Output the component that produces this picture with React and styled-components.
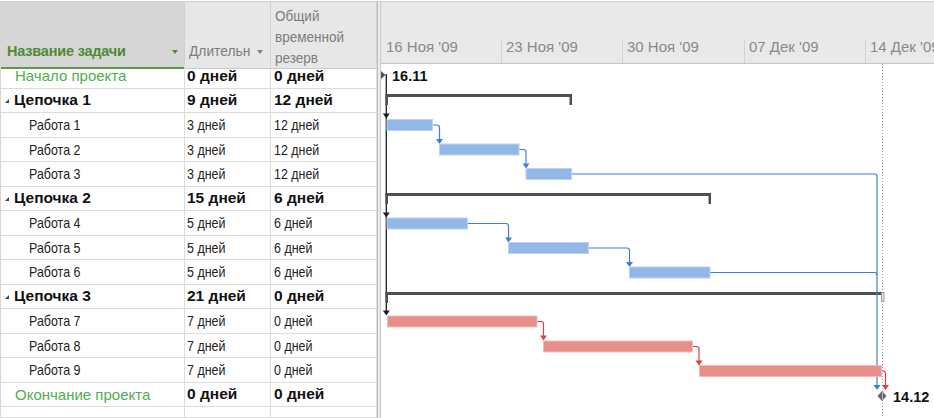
import React from "react";
import styled, { createGlobalStyle } from "styled-components";

const GlobalStyle = createGlobalStyle`
  html, body { margin: 0; padding: 0; background: #fff; }
  body { font-family: "Liberation Sans", Arial, sans-serif; }
  #root { width: 934px; height: 418px; overflow: hidden; }
  * { box-sizing: border-box; }
`;

const Page = styled.div`
  display: flex;
  width: 934px;
  height: 418px;
  padding-top: 1px;
  background: #fff;
  overflow: hidden;
`;

const Table = styled.div`
  width: 377px;
  display: flex;
  flex-direction: column;
  border-left: 1px solid #d6d6d6;
`;

const HeaderRow = styled.div`
  display: grid;
  grid-template-columns: 184px 86px 106px;
  height: 63px;
  border-top: 1px solid #cdcdcd;
`;

const NameHead = styled.div`
  background: #d6d6d6;
  border-bottom: 2px solid #5b9a47;
  border-right: 1px solid #cfcfcf;
  display: flex;
  align-items: flex-end;
  justify-content: space-between;
  padding: 0 6px 8px 6px;
`;

const HeadTitle = styled.span`
  font-size: 14.5px;
  font-weight: bold;
  color: #4f8a35;
  line-height: 16px;
  letter-spacing: -0.2px;
`;

const SortArrow = styled.span`
  flex: none;
  width: 0;
  height: 0;
  border-left: 3.5px solid transparent;
  border-right: 3.5px solid transparent;
  border-top: 4px solid ${(p) => p.$color};
  margin-bottom: 5px;
  margin-left: ${(p) => p.$gap || 0}px;
`;

const PlainHead = styled.div`
  background: #e7e7e7;
  border-bottom: 1px solid #c9c9c9;
  border-right: 1px solid #d2d2d2;
  display: flex;
  align-items: ${(p) => (p.$top ? "flex-start" : "flex-end")};
  padding: ${(p) => (p.$top ? "3px 0 0 4px" : "0 0 9px 4px")};
`;

const Squeeze = styled.span`
  display: inline-block;
  white-space: nowrap;
  transform: scaleX(${(p) => p.$sx || 0.83});
  transform-origin: left center;
`;

const HeadText = styled.div`
  font-size: 15px;
  line-height: ${(p) => p.$lh || 16}px;
  color: #7c7c7c;
  display: flex;
  align-items: flex-end;
`;

const Row = styled.div`
  display: grid;
  grid-template-columns: 184px 86px 106px;
  height: 24.5px;
  border-bottom: 1px solid #dcdcdc;
  flex: ${(p) => (p.$fill ? "1" : "none")};
`;

const Cell = styled.div`
  display: flex;
  align-items: center;
  padding-left: ${(p) => p.$pad || 2}px;
  border-right: 1px solid #dcdcdc;
  white-space: nowrap;
  overflow: hidden;
  font-size: ${(p) => (p.$bold ? 15.5 : 15)}px;
  color: ${(p) => p.$color || "#111"};
  font-weight: ${(p) => (p.$bold ? "bold" : "normal")};
`;

const Collapse = styled.span`
  width: 0;
  height: 0;
  border-left: 4px solid transparent;
  border-bottom: 4px solid #444;
  margin-right: 5px;
  margin-top: 2px;
`;

const Splitter = styled.div`
  width: 4px;
  background: #ebebeb;
  border-left: 1px solid #bcbcbc;
  border-right: 1px solid #c8c8c8;
`;

const Gantt = styled.div`
  flex: 1;
  display: flex;
  flex-direction: column;
  min-width: 0;
`;

const GanttHeader = styled.div`
  height: 63px;
  border-top: 1px solid #cdcdcd;
  border-bottom: 1px solid #c6c6c6;
  background: #e9e9e9;
  display: flex;
  flex-direction: column;
  justify-content: flex-end;
`;

const WeekRow = styled.div`
  display: flex;
  height: 24px;
`;

const WeekCell = styled.div`
  flex: none;
  width: ${(p) => p.$w}px;
  border-left: ${(p) => (p.$first ? "none" : "1px solid #d3d3d3")};
  padding-left: ${(p) => (p.$first ? 5 : 4)}px;
  font-size: 15px;
  line-height: 16px;
  color: #8a8a8a;
  white-space: nowrap;
  overflow: hidden;
`;

const GanttBody = styled.div`
  flex: 1;
  position: relative;
  overflow: hidden;
  background: #fff;
`;

const rows = [
  { t: "m", name: "Начало проекта", dur: "0 дней", res: "0 дней" },
  { t: "s", name: "Цепочка 1", dur: "9 дней", res: "12 дней" },
  { t: "w", name: "Работа 1", dur: "3 дней", res: "12 дней" },
  { t: "w", name: "Работа 2", dur: "3 дней", res: "12 дней" },
  { t: "w", name: "Работа 3", dur: "3 дней", res: "12 дней" },
  { t: "s", name: "Цепочка 2", dur: "15 дней", res: "6 дней" },
  { t: "w", name: "Работа 4", dur: "5 дней", res: "6 дней" },
  { t: "w", name: "Работа 5", dur: "5 дней", res: "6 дней" },
  { t: "w", name: "Работа 6", dur: "5 дней", res: "6 дней" },
  { t: "s", name: "Цепочка 3", dur: "21 дней", res: "0 дней" },
  { t: "w", name: "Работа 7", dur: "7 дней", res: "0 дней" },
  { t: "w", name: "Работа 8", dur: "7 дней", res: "0 дней" },
  { t: "w", name: "Работа 9", dur: "7 дней", res: "0 дней" },
  { t: "m", name: "Окончание проекта", dur: "0 дней", res: "0 дней" },
];

const weeks = [
  { label: "16 Ноя '09", w: 120 },
  { label: "23 Ноя '09", w: 121 },
  { label: "30 Ноя '09", w: 122 },
  { label: "07 Дек '09", w: 121 },
  { label: "14 Дек '09", w: 121 },
];

const blueBars = [
  [387, 119.5, 45.5],
  [439.5, 144, 79.5],
  [526, 168.5, 45.5],
  [387, 218, 80.5],
  [508.5, 242.5, 80],
  [629.5, 267, 80.5],
];
const redBars = [
  [387.5, 316, 149.5],
  [543.5, 341, 149],
  [699.5, 365.5, 182],
];

const Arrow = ({ x, tip, color }) => (
  <polygon points={`${x - 3.5},${tip - 5} ${x + 3.5},${tip - 5} ${x},${tip}`} fill={color} />
);

const Link = ({ x1, y, x2, tip, color }) => (
  <g>
    <path
      d={`M${x1} ${y} H${x2 - 2.5} Q${x2} ${y} ${x2} ${y + 2.5} V${tip - 4}`}
      fill="none"
      stroke={color}
      strokeWidth="1.2"
    />
    <Arrow x={x2} tip={tip} color={color} />
  </g>
);

const Summary = ({ x1, x2, y }) => (
  <g fill="#4f4f4f">
    <rect x={x1} y={y} width={x2 - x1} height={3} />
    <rect x={x1} y={y} width={2.5} height={11} />
    <rect x={x2 - 2.5} y={y} width={2.5} height={11} />
  </g>
);

function Chart() {
  const blue = "#3d7fd8";
  const red = "#d8433c";
  return (
    <svg
      width="553"
      height="354"
      viewBox="381 64 553 354"
      style={{ display: "block" }}
    >
      <line x1="882.5" y1="64" x2="882.5" y2="418" stroke="#9a9a9a" strokeWidth="1" strokeDasharray="1 2" />

      {/* start milestone + driver line */}
      <polygon points="381,71 385.5,75 381,79" fill="#555" />
      <line x1="386.3" y1="74" x2="386.3" y2="312" stroke="#1e1e1e" strokeWidth="1.3" />
      <Arrow x={386.3} tip={118.5} color="#1e1e1e" />
      <Arrow x={386.3} tip={217.5} color="#1e1e1e" />
      <Arrow x={386.3} tip={315.5} color="#1e1e1e" />
      <text x="392" y="80.5" fontFamily="Liberation Sans, Arial, sans-serif" fontSize="14.5" fontWeight="bold" fill="#111">
        16.11
      </text>

      {/* summary bars */}
      <Summary x1={385.5} x2={572} y={94} />
      <Summary x1={385.5} x2={711} y={193} />
      <g fill="#4f4f4f">
        <rect x={385.5} y={292} width={496} height={3} />
        <rect x={385.5} y={292} width={2.5} height={11} />
      </g>
      <rect x={881.5} y={292.5} width={2.5} height={9} fill="#e4e4e4" stroke="#8a8a8a" strokeWidth="0.8" />

      {/* links blue */}
      <Link x1={432.5} y={125} x2={439.5} tip={144} color={blue} />
      <Link x1={519} y={149.5} x2={526} tip={168.5} color={blue} />
      <Link x1={467.5} y={223.5} x2={508.5} tip={242.5} color={blue} />
      <Link x1={589} y={248} x2={629.5} tip={267} color={blue} />
      <Link x1={571.5} y={174} x2={877} tip={390} color={blue} />
      <path d="M710 272.5 H874.5 Q877 272.5 877 275" fill="none" stroke={blue} strokeWidth="1.2" />

      {/* links red */}
      <Link x1={537} y={321.5} x2={543.5} tip={340.5} color={red} />
      <Link x1={692.5} y={346.5} x2={699} tip={365.5} color={red} />
      <Link x1={881.5} y={371} x2={885.5} tip={390} color={red} />

      {/* task bars */}
      {blueBars.map(([x, y, w], i) => (
        <rect key={"b" + i} x={x} y={y} width={w} height={11} fill="#93b8e8" stroke="#bcd3f2" strokeWidth="1" />
      ))}
      {redBars.map(([x, y, w], i) => (
        <rect key={"r" + i} x={x} y={y} width={w} height={11} fill="#e88f8b" stroke="#f3bab7" strokeWidth="1" />
      ))}

      {/* end milestone */}
      <polygon points="882,391 886.5,396 882,401 877.5,396" fill="#666" />
      <line x1="882.5" y1="392" x2="882.5" y2="400" stroke="#b5b5b5" strokeWidth="1" />
      <text x="893" y="401.5" fontFamily="Liberation Sans, Arial, sans-serif" fontSize="14.5" fontWeight="bold" fill="#111">
        14.12
      </text>
    </svg>
  );
}

function TaskRow({ r }) {
  if (r.t === "m") {
    return (
      <Row>
        <Cell $pad={14} $color="#4fae4f">{r.name}</Cell>
        <Cell $bold>{r.dur}</Cell>
        <Cell $pad={3} $bold>{r.res}</Cell>
      </Row>
    );
  }
  if (r.t === "s") {
    return (
      <Row>
        <Cell $pad={4} $bold>
          <Collapse />
          {r.name}
        </Cell>
        <Cell $bold>{r.dur}</Cell>
        <Cell $pad={3} $bold>{r.res}</Cell>
      </Row>
    );
  }
  return (
    <Row>
      <Cell $pad={28} $color="#222">
        <Squeeze>{r.name}</Squeeze>
      </Cell>
      <Cell $color="#222">
        <Squeeze>{r.dur}</Squeeze>
      </Cell>
      <Cell $pad={3} $color="#222">
        <Squeeze>{r.res}</Squeeze>
      </Cell>
    </Row>
  );
}

export default function App() {
  return (
    <>
      <GlobalStyle />
      <Page>
        <Table>
          <HeaderRow>
            <NameHead>
              <HeadTitle>Название задачи</HeadTitle>
              <SortArrow $color="#4f8a35" />
            </NameHead>
            <PlainHead>
              <HeadText>
                <Squeeze $sx={0.92}>Длительн</Squeeze>
                <SortArrow $color="#808080" $gap={1} />
              </HeadText>
            </PlainHead>
            <PlainHead $top>
              <HeadText $lh={21}>
                <Squeeze $sx={0.9}>
                  Общий
                  <br />
                  временной
                  <br />
                  резерв
                </Squeeze>
              </HeadText>
            </PlainHead>
          </HeaderRow>
          {rows.map((r, i) => (
            <TaskRow key={i} r={r} />
          ))}
          <Row $fill>
            <Cell />
            <Cell />
            <Cell />
          </Row>
        </Table>
        <Splitter />
        <Gantt>
          <GanttHeader>
            <WeekRow>
              {weeks.map((w, i) => (
                <WeekCell key={i} $w={w.w} $first={i === 0}>
                  {w.label}
                </WeekCell>
              ))}
            </WeekRow>
          </GanttHeader>
          <GanttBody>
            <Chart />
          </GanttBody>
        </Gantt>
      </Page>
    </>
  );
}
